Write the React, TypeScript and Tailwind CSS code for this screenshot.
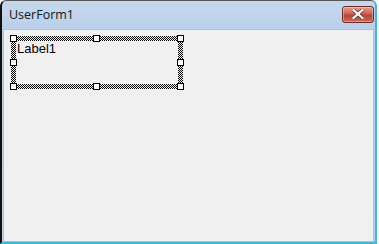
import React from "react";

const hatch =
  "bg-[conic-gradient(#000_25%,transparent_0_50%,#000_0_75%,transparent_0)] bg-[length:2px_2px]";

function Handle({ cls }: { cls: string }) {
  return <div className={`absolute w-[7px] h-[7px] bg-white border border-black ${cls}`} />;
}

export default function App() {
  return (
    <div className="w-[379px] h-[244px] bg-white overflow-hidden">
      <div className="w-[377px] h-[244px] flex flex-col rounded-t-[6px] border-t border-l-2 border-r-2 border-b-2 border-t-[#555] border-l-[#111] border-r-[#3fb6dc] border-b-[#3fb6dc] bg-[linear-gradient(#c6d8ee,#b9d0ea_30px,#bcd2ea)]">
        <div className="h-[28px] flex items-center justify-between pl-[7px] pr-[1px] shrink-0">
          <span
            className="text-[12.5px] text-[#141414] leading-none mt-[1px]"
            style={{ fontFamily: '"Open Sans", "Noto Sans", sans-serif' }}
          >
            UserForm1
          </span>
          <div className="w-[32px] h-[17px] mt-[-2px] rounded-[3px] border border-[#6b2a24] bg-[linear-gradient(#e4a094,#cc6152_45%,#bb4535_55%,#c8695a)] flex items-center justify-center shadow-[inset_0_0_0_1px_rgba(255,255,255,0.35)]">
            <svg width="12" height="10" viewBox="0 0 12 10">
              <path
                d="M1.5 1 L10.5 9 M10.5 1 L1.5 9"
                stroke="#5a2a25"
                strokeWidth="3.6"
                strokeLinecap="square"
              />
              <path
                d="M1.5 1 L10.5 9 M10.5 1 L1.5 9"
                stroke="#ffffff"
                strokeWidth="2.2"
                strokeLinecap="square"
              />
            </svg>
          </div>
        </div>
        <div className="flex-1 mx-[1px] border border-[#a9c4e2] bg-[#f0f0f0] pl-[6px] pt-[5px]">
          <div className="relative w-[174px] h-[55px] p-[1px]">
            <div className={`w-full h-full p-[5px] ${hatch}`}>
              <div className="w-full h-full bg-[#f0f0f0]">
                <span
                  className="block text-[13px] leading-none text-black pt-[1px] pl-[1px]"
                  style={{ fontFamily: '"Liberation Sans", Arial, sans-serif' }}
                >
                  Label1
                </span>
              </div>
            </div>
            <Handle cls="left-0 top-0" />
            <Handle cls="left-[83px] top-0" />
            <Handle cls="right-0 top-0" />
            <Handle cls="left-0 top-[24px]" />
            <Handle cls="right-0 top-[24px]" />
            <Handle cls="left-0 bottom-0" />
            <Handle cls="left-[83px] bottom-0" />
            <Handle cls="right-0 bottom-0" />
          </div>
        </div>
      </div>
    </div>
  );
}
